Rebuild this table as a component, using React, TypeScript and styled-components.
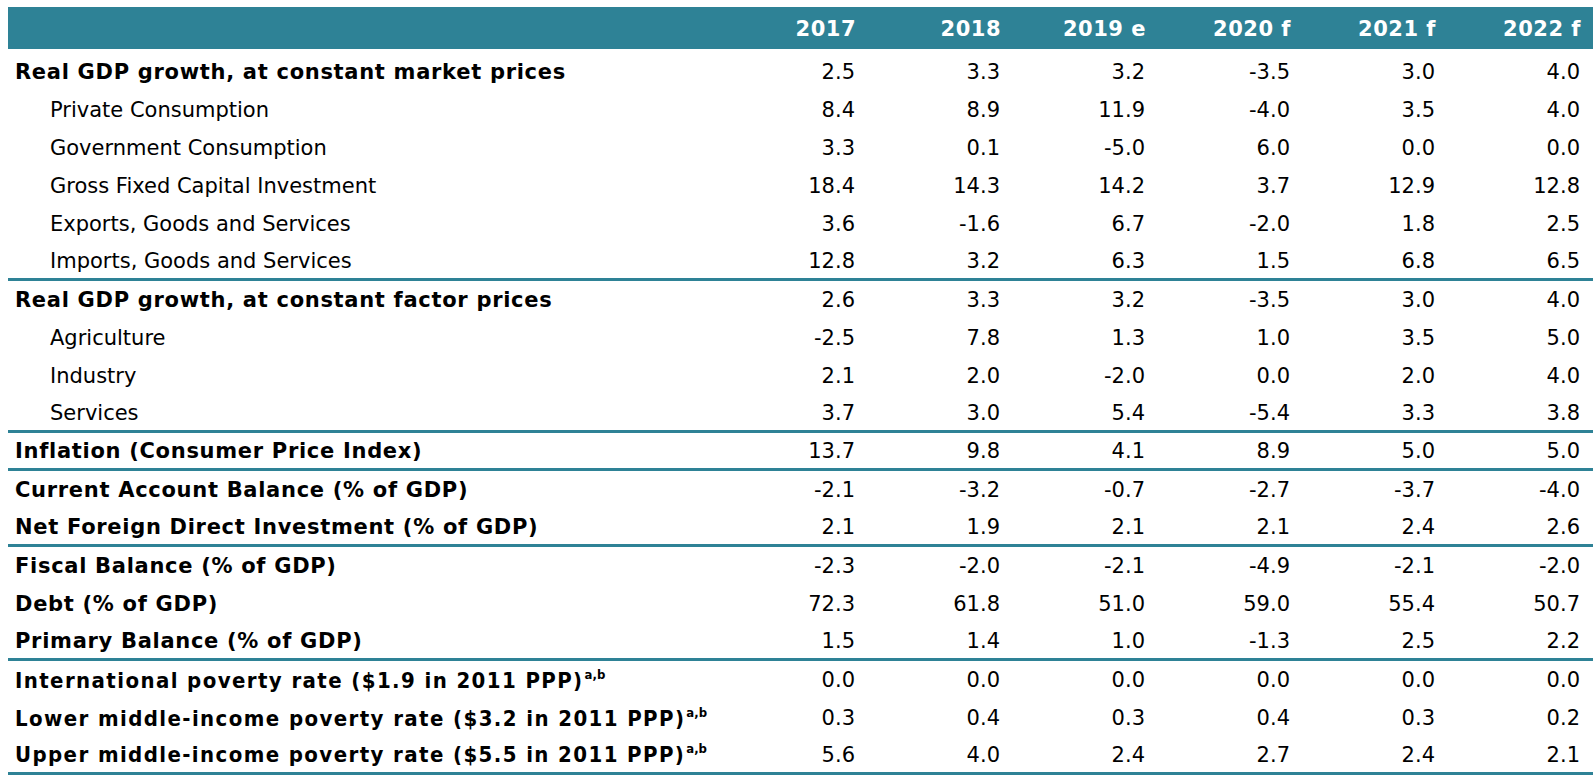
import React from 'react';
import styled, { createGlobalStyle } from 'styled-components';

const teal = '#2e8296';

const GlobalStyle = createGlobalStyle`
  html, body {
    margin: 0;
    padding: 0;
    background: #fff;
  }
  body {
    font-family: 'DejaVu Sans', Verdana, sans-serif;
    color: #000;
  }
`;

interface RowData {
  label: string;
  values: string[];
  kind: 'head' | 'sub' | 'poverty';
  rule?: boolean;
}

const years = ['2017', '2018', '2019 e', '2020 f', '2021 f', '2022 f'];

const rows: RowData[] = [
  { label: 'Real GDP growth, at constant market prices', kind: 'head', values: ['2.5', '3.3', '3.2', '-3.5', '3.0', '4.0'] },
  { label: 'Private Consumption', kind: 'sub', values: ['8.4', '8.9', '11.9', '-4.0', '3.5', '4.0'] },
  { label: 'Government Consumption', kind: 'sub', values: ['3.3', '0.1', '-5.0', '6.0', '0.0', '0.0'] },
  { label: 'Gross Fixed Capital Investment', kind: 'sub', values: ['18.4', '14.3', '14.2', '3.7', '12.9', '12.8'] },
  { label: 'Exports, Goods and Services', kind: 'sub', values: ['3.6', '-1.6', '6.7', '-2.0', '1.8', '2.5'] },
  { label: 'Imports, Goods and Services', kind: 'sub', rule: true, values: ['12.8', '3.2', '6.3', '1.5', '6.8', '6.5'] },
  { label: 'Real GDP growth, at constant factor prices', kind: 'head', values: ['2.6', '3.3', '3.2', '-3.5', '3.0', '4.0'] },
  { label: 'Agriculture', kind: 'sub', values: ['-2.5', '7.8', '1.3', '1.0', '3.5', '5.0'] },
  { label: 'Industry', kind: 'sub', values: ['2.1', '2.0', '-2.0', '0.0', '2.0', '4.0'] },
  { label: 'Services', kind: 'sub', rule: true, values: ['3.7', '3.0', '5.4', '-5.4', '3.3', '3.8'] },
  { label: 'Inflation (Consumer Price Index)', kind: 'head', rule: true, values: ['13.7', '9.8', '4.1', '8.9', '5.0', '5.0'] },
  { label: 'Current Account Balance (% of GDP)', kind: 'head', values: ['-2.1', '-3.2', '-0.7', '-2.7', '-3.7', '-4.0'] },
  { label: 'Net Foreign Direct Investment (% of GDP)', kind: 'head', rule: true, values: ['2.1', '1.9', '2.1', '2.1', '2.4', '2.6'] },
  { label: 'Fiscal Balance (% of GDP)', kind: 'head', values: ['-2.3', '-2.0', '-2.1', '-4.9', '-2.1', '-2.0'] },
  { label: 'Debt (% of GDP)', kind: 'head', values: ['72.3', '61.8', '51.0', '59.0', '55.4', '50.7'] },
  { label: 'Primary Balance (% of GDP)', kind: 'head', rule: true, values: ['1.5', '1.4', '1.0', '-1.3', '2.5', '2.2'] },
  { label: 'International poverty rate ($1.9 in 2011 PPP)', kind: 'poverty', values: ['0.0', '0.0', '0.0', '0.0', '0.0', '0.0'] },
  { label: 'Lower middle-income poverty rate ($3.2 in 2011 PPP)', kind: 'poverty', values: ['0.3', '0.4', '0.3', '0.4', '0.3', '0.2'] },
  { label: 'Upper middle-income poverty rate ($5.5 in 2011 PPP)', kind: 'poverty', rule: true, values: ['5.6', '4.0', '2.4', '2.7', '2.4', '2.1'] },
];

const Table = styled.div`
  margin: 7px 0 0 8px;
  width: 1585px;
  font-size: 21px;
`;

const HeaderRow = styled.div`
  display: grid;
  grid-template-columns: 715px repeat(6, 145px);
  height: 42px;
  background: ${teal};
  color: #fff;
  font-weight: bold;
  letter-spacing: 0.5px;
  margin-bottom: 4px;
`;

const HeaderCell = styled.div`
  text-align: right;
  padding: 2px 12px 0 0;
  line-height: 40px;
`;

const Row = styled.div<{ $rule?: boolean }>`
  display: grid;
  grid-template-columns: 715px repeat(6, 145px);
  box-sizing: border-box;
  height: 38px;
  align-items: center;
  border-bottom: ${({ $rule }) => ($rule ? `3px solid ${teal}` : 'none')};
`;

const Label = styled.div<{ $kind: RowData['kind'] }>`
  padding-left: ${({ $kind }) => ($kind === 'sub' ? '42px' : '7px')};
  font-weight: ${({ $kind }) => ($kind === 'sub' ? 'normal' : 'bold')};
  font-family: ${({ $kind }) =>
    $kind === 'poverty'
      ? "'DejaVu Sans Condensed', 'DejaVu Sans', sans-serif"
      : "'DejaVu Sans', Verdana, sans-serif"};
  font-stretch: ${({ $kind }) => ($kind === 'poverty' ? 'condensed' : 'normal')};
  font-size: ${({ $kind }) => ($kind === 'poverty' ? '22px' : '21px')};
  letter-spacing: ${({ $kind }) =>
    $kind === 'poverty' ? '1.4px' : $kind === 'head' ? '0.7px' : '0'};
  white-space: nowrap;
`;

const Note = styled.sup`
  font-size: 13px;
  letter-spacing: 0;
  vertical-align: 9px;
  line-height: 0;
  margin-left: 1px;
`;

const Value = styled.div`
  text-align: right;
  padding-right: 13px;
`;

const App: React.FC = () => {
  return (
    <>
      <GlobalStyle />
      <Table>
        <HeaderRow>
          <div />
          {years.map((y) => (
            <HeaderCell key={y}>{y}</HeaderCell>
          ))}
        </HeaderRow>
        {rows.map((r) => (
          <Row key={r.label} $rule={r.rule}>
            <Label $kind={r.kind}>
              {r.label}
              {r.kind === 'poverty' && <Note>a,b</Note>}
            </Label>
            {r.values.map((v, i) => (
              <Value key={i}>{v}</Value>
            ))}
          </Row>
        ))}
      </Table>
    </>
  );
};

export default App;
